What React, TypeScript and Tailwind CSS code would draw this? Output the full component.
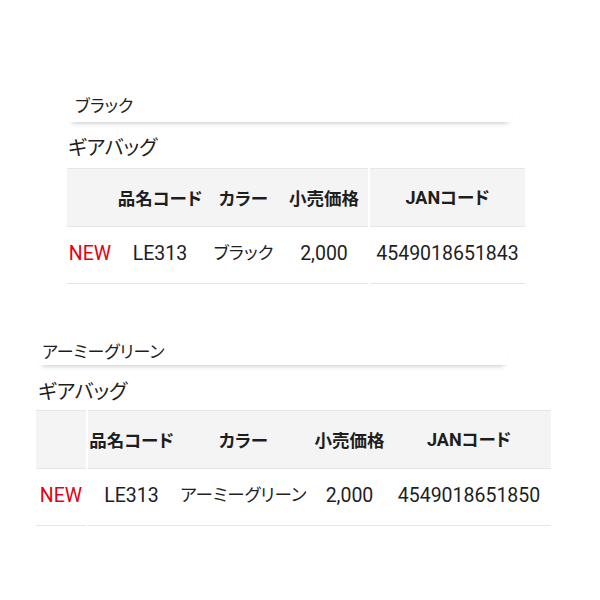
import React from "react";

const jp: React.CSSProperties = {
  fontFamily: '"Noto Sans CJK JP", "Noto Sans", sans-serif',
  fontFeatureSettings: '"palt"',
};
const lat: React.CSSProperties = { fontFamily: 'Roboto, "Noto Sans CJK JP", sans-serif' };

type Props = {
  color: string;
  jan: string;
  widths: number[];
  divider: number;
};

function Block({ color, jan, widths, divider }: Props) {
  const headers = ["", "品名コード", "カラー", "小売価格", "JANコード"];
  const cells: { t: string; latin: boolean; red?: boolean }[] = [
    { t: "NEW", latin: true, red: true },
    { t: "LE313", latin: true },
    { t: color, latin: false },
    { t: "2,000", latin: true },
    { t: jan, latin: true },
  ];
  return (
    <table
      className="border-collapse table-fixed text-[#1e1e1e]"
      style={{ width: widths.reduce((a, b) => a + b, 0) }}
    >
      <colgroup>
        {widths.map((w, i) => (
          <col key={i} style={{ width: w }} />
        ))}
      </colgroup>
      <thead>
        <tr className="h-[58px] bg-[#f4f4f4]">
          {headers.map((h, i) => (
            <th
              key={i}
              className={`p-0 text-center text-[17.5px] leading-[24px] font-bold whitespace-nowrap border-t border-b border-[#e6e6e6] ${
                i === divider ? "border-l-2 border-l-white" : ""
              }`}
              style={jp}
            >
              {h === "JANコード" ? (
                <>
                  <span style={lat} className="text-[18px]">
                    JAN
                  </span>
                  <span style={jp}>コード</span>
                </>
              ) : (
                h
              )}
            </th>
          ))}
        </tr>
      </thead>
      <tbody>
        <tr className="h-[57px]">
          {cells.map((c, i) => (
            <td
              key={i}
              className={`p-0 text-center whitespace-nowrap border-b border-[#e6e6e6] ${
                i === divider ? "border-l-2 border-l-white" : ""
              } ${c.latin ? "text-[19.5px] leading-[24px] pb-[2px]" : "text-[17.5px] leading-[24px] pb-[6px]"} ${
                c.red ? "text-[#e60012]" : ""
              }`}
              style={c.latin ? lat : jp}
            >
              {c.t}
            </td>
          ))}
        </tr>
      </tbody>
    </table>
  );
}

export default function App() {
  return (
    <div className="w-[600px] h-[600px] bg-white text-[#1e1e1e]" style={jp}>
      <div className="pt-[93px]">
        {/* Block 1 */}
        <div className="ml-[67px] w-[458px]">
          <div className="ml-[1px] w-[444px] pl-[7px] pb-[5px] bg-white shadow-[0_5px_5px_-4px_rgba(0,0,0,0.22)]">
            <div className="text-[17px] leading-[24px]">ブラック</div>
          </div>
          <div className="mt-[13px] ml-[1px] text-[20px] leading-[24px]">ギアバッグ</div>
          <div className="mt-[9px]">
            <Block color="ブラック" jan="4549018651843" widths={[46, 94, 73, 89, 156]} divider={4} />
          </div>
        </div>

        {/* Block 2 */}
        <div className="mt-[55px] ml-[36px] w-[515px]">
          <div className="ml-[2px] w-[470px] pl-[4px] pb-[2px] bg-white shadow-[0_5px_5px_-4px_rgba(0,0,0,0.22)]">
            <div className="text-[17px] leading-[24px]">アーミーグリーン</div>
          </div>
          <div className="mt-[14px] ml-[2px] text-[20px] leading-[24px]">ギアバッグ</div>
          <div className="mt-[7px]">
            <Block color="アーミーグリーン" jan="4549018651850" widths={[51, 88, 137, 75, 164]} divider={1} />
          </div>
        </div>
      </div>
    </div>
  );
}
